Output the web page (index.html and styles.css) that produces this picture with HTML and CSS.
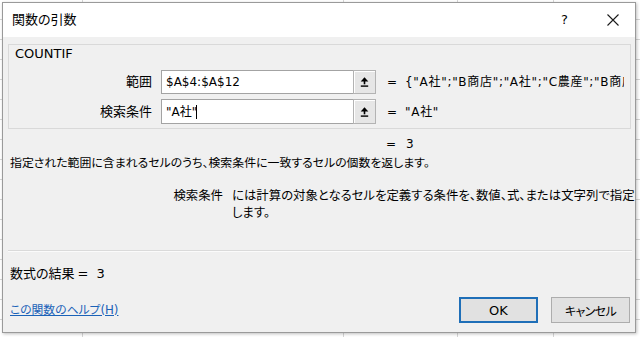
FILE: index.html
```html
<!DOCTYPE html>
<html lang="ja">
<head>
<meta charset="utf-8">
<title>関数の引数</title>
<link rel="stylesheet" href="styles.css">
</head>
<body>
<div class="dialog">
  <div class="titlebar">
    <span class="title">関数の引数</span>
    <span class="help">?</span>
    <span class="close">
      <svg width="12" height="12" viewBox="0 0 12 12"><path d="M0.5 0.5 L11.5 11.5 M11.5 0.5 L0.5 11.5" stroke="#1a1a1a" stroke-width="1.1" fill="none"/></svg>
    </span>
  </div>
  <div class="content">
    <div class="group">
      <div class="fname">COUNTIF</div>
      <div class="arg-row">
        <span class="arg-label">範囲</span>
        <div class="field">
          <div class="input">$A$4:$A$12</div>
          <span class="ref-btn"><svg width="9" height="10" viewBox="0 0 9 10"><path d="M4.5 0.3 L8.3 4.6 L0.7 4.6 Z" fill="#000"/><rect x="3.7" y="4" width="1.6" height="3.3" fill="#000"/><rect x="0.8" y="8.4" width="7.4" height="1.4" fill="#000"/></svg></span>
        </div>
        <span class="eq">=</span>
        <span class="val">{"A社";"B商店";"A社";"C農産";"B商店";"A社";"C農産";"D工業";"A社"}</span>
      </div>
      <div class="arg-row">
        <span class="arg-label">検索条件</span>
        <div class="field">
          <div class="input">"A社"<span class="caret"></span></div>
          <span class="ref-btn"><svg width="9" height="10" viewBox="0 0 9 10"><path d="M4.5 0.3 L8.3 4.6 L0.7 4.6 Z" fill="#000"/><rect x="3.7" y="4" width="1.6" height="3.3" fill="#000"/><rect x="0.8" y="8.4" width="7.4" height="1.4" fill="#000"/></svg></span>
        </div>
        <span class="eq">=</span>
        <span class="val">"A社"</span>
      </div>
    </div>
    <div class="result-row"><span class="eq">=</span><span class="rval">3</span></div>
    <p class="desc">指定された範囲に含まれるセルのうち、検索条件に一致するセルの個数を返します。</p>
    <div class="argdesc">
      <span class="argname">検索条件</span>
      <span class="argtext">には計算の対象となるセルを定義する条件を、数値、式、または文字列で指定<br>します。</span>
    </div>
    <div class="sep"></div>
    <div class="formula-result"><span>数式の結果</span><span class="fr-eq">=</span><span class="fr-val">3</span></div>
    <div class="footer">
      <span class="help-cell"><a class="help-link" href="#">この関数のヘルプ(H)</a></span>
      <div class="buttons">
        <button class="btn btn-ok">OK</button>
        <button class="btn btn-cancel">キャンセル</button>
      </div>
    </div>
  </div>
</div>
</body>
</html>
```

FILE: styles.css
```css
* { box-sizing: border-box; }
html, body { margin: 0; }
body {
  width: 640px;
  height: 337px;
  overflow: hidden;
  padding: 2px 0 0 2px;
  background-color: #fff;
  background-image:
    linear-gradient(to right, transparent 82px, #d6d6d6 82px 83px, transparent 83px 343px, #d6d6d6 343px 344px, transparent 344px 457px, #d6d6d6 457px 458px, transparent 458px 553px, #d6d6d6 553px 554px, transparent 554px),
    repeating-linear-gradient(to bottom, transparent 0 19px, #d6d6d6 19px 20px);
}
.dialog {
  width: 634px;
  height: 331px;
  border: 1px solid #9a9a9a;
  background: #f0f0f0;
  box-shadow: 1px 1px 3px rgba(0,0,0,0.25);
  display: flex;
  flex-direction: column;
  font-family: "DejaVu Sans", "Noto Sans CJK JP", sans-serif;
  font-size: 13px;
  font-feature-settings: "palt";
  color: #000;
}
.titlebar {
  height: 34px;
  background: #fff;
  display: flex;
  align-items: center;
  padding: 0 0 0 9px;
}
.title { flex: 1; line-height: 16px; }
.help { width: 10px; margin-right: 36px; font-size: 13px; line-height: 16px; }
.close { display: flex; width: 12px; height: 12px; margin-right: 16px; }
.content {
  flex: 1;
  display: flex;
  flex-direction: column;
  padding: 7px 4px 9px 5px;
}
.group {
  border: 1px solid #d9d9d9;
  padding: 1px 6px 4px 6px;
}
.fname { line-height: 16px; }
.arg-row {
  display: flex;
  align-items: center;
  margin-top: 5px;
}
.fname + .arg-row { margin-top: 8px; }
.arg-row + .arg-row { height: 25px; }
.arg-label {
  width: 137px;
  text-align: right;
  line-height: 16px;
}
.field {
  display: flex;
  margin-left: 9px;
  height: 24px;
}
.arg-row + .arg-row .field { height: 25px; }
.input {
  width: 192px;
  background: #fff;
  border: 1px solid #a3a3a3;
  border-right: none;
  font-size: 12px;
  line-height: 22px;
  padding-left: 4px;
  display: flex;
  align-items: center;
  white-space: nowrap;
}
.caret {
  display: inline-block;
  width: 1px;
  height: 14px;
  background: #000;
  margin-left: -1px;
}
.ref-btn {
  width: 23px;
  background: #e6e6e6;
  border: 1px solid #b3b3b3;
  box-shadow: inset 1px 1px 0 #fff;
  display: flex;
  align-items: center;
  justify-content: center;
}
.eq {
  width: 7px;
  margin-left: 11px;
  font-size: 12px;
  line-height: 16px;
}
.val {
  flex: 1;
  margin-left: 11px;
  font-size: 12px;
  letter-spacing: 0.7px;
  line-height: 16px;
  white-space: nowrap;
  overflow: hidden;
}
.result-row {
  display: flex;
  margin-top: 7px;
  padding-left: 367px;
  font-size: 12px;
  line-height: 16px;
}
.rval { margin-left: 13px; }
.desc {
  margin: 3px 0 0 2px;
  font-size: 11.9px;
  line-height: 16px;
  white-space: nowrap;
}
.argdesc {
  display: flex;
  margin-top: 16px;
  padding-left: 161px;
  font-size: 12.4px;
  line-height: 17px;
}
.argname { width: 54px; text-align: right; flex-shrink: 0; }
.argtext { margin-left: 9px; white-space: nowrap; }
.sep {
  margin-top: auto;
  height: 2px;
  border-top: 1px solid #dadada;
  border-bottom: 1px solid #fbfbfb;
  margin-right: -1px;
}
.formula-result {
  display: flex;
  margin: 14px 0 0 2px;
  line-height: 16px;
}
.fr-eq { margin-left: 3px; }
.fr-val { margin-left: 8px; }
.footer {
  display: flex;
  align-items: center;
  margin-top: 15px;
  height: 26px;
}
.help-cell { flex: 1; padding-left: 2px; line-height: 16px; }
.help-link {
  color: #1a62b8;
  text-decoration: underline;
  font-size: 11.8px;
}
.buttons {
  display: flex;
  gap: 13px;
  margin-right: 1px;
}
.btn {
  width: 79px;
  height: 26px;
  background: #e1e1e1;
  border: 1px solid #adadad;
  font-family: "DejaVu Sans", "Noto Sans CJK JP", sans-serif;
  font-feature-settings: "palt";
  font-size: 13px;
  color: #000;
  padding: 0;
}
.btn-cancel { font-size: 12px; letter-spacing: -0.6px; }
.btn-ok { border: 2px solid #1f6fb8; }
```
